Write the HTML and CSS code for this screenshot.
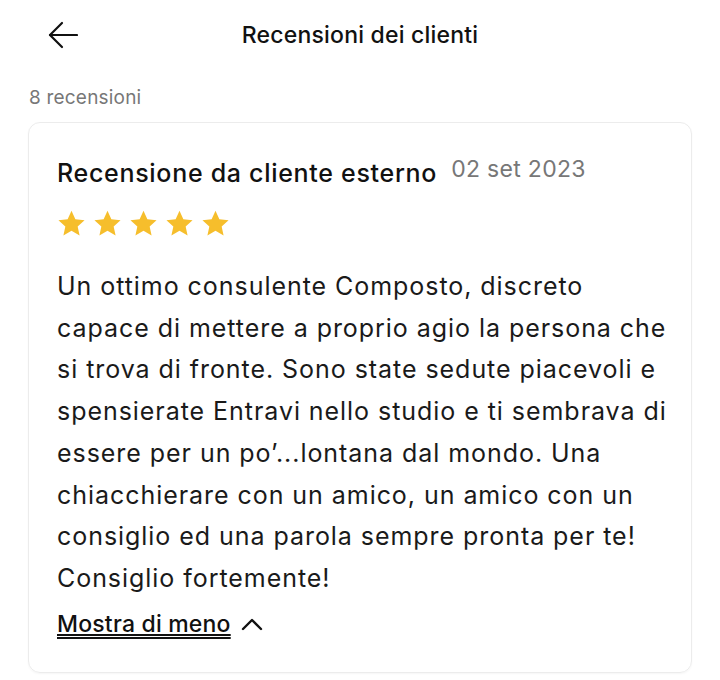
FILE: index.html
```html
<!DOCTYPE html>
<html lang="it">
<head>
    <meta charset="UTF-8">
    <meta name="viewport" content="width=device-width, initial-scale=1.0">
    <title>Recensioni dei clienti</title>
    <link rel="stylesheet" href="styles.css">
</head>
<body>
    <header class="topbar">
        <button class="back" aria-label="Indietro">
            <svg width="30" height="28" viewBox="0 0 30 28" fill="none" stroke="#111" stroke-width="2.2" stroke-linecap="round" stroke-linejoin="round">
                <path d="M29 14H2"/>
                <path d="M14 2L2 14l12 12"/>
            </svg>
        </button>
        <h1>Recensioni dei clienti</h1>
    </header>

    <div class="count">8 recensioni</div>

    <section class="card">
        <div class="card-head">
            <h2>Recensione da cliente esterno</h2>
            <span class="date">02 set 2023</span>
        </div>
        <div class="stars">
            <svg viewBox="0 0 24 24"><path d="M12 1.5l3.2 7 7.6.8-5.7 5.1 1.6 7.6L12 18.1 5.3 22l1.6-7.6L1.2 9.3l7.6-.8z"/></svg>
            <svg viewBox="0 0 24 24"><path d="M12 1.5l3.2 7 7.6.8-5.7 5.1 1.6 7.6L12 18.1 5.3 22l1.6-7.6L1.2 9.3l7.6-.8z"/></svg>
            <svg viewBox="0 0 24 24"><path d="M12 1.5l3.2 7 7.6.8-5.7 5.1 1.6 7.6L12 18.1 5.3 22l1.6-7.6L1.2 9.3l7.6-.8z"/></svg>
            <svg viewBox="0 0 24 24"><path d="M12 1.5l3.2 7 7.6.8-5.7 5.1 1.6 7.6L12 18.1 5.3 22l1.6-7.6L1.2 9.3l7.6-.8z"/></svg>
            <svg viewBox="0 0 24 24"><path d="M12 1.5l3.2 7 7.6.8-5.7 5.1 1.6 7.6L12 18.1 5.3 22l1.6-7.6L1.2 9.3l7.6-.8z"/></svg>
        </div>
        <p class="text">
            Un ottimo consulente Composto, discreto<br>
            capace di mettere a proprio agio la persona che<br>
            si trova di fronte. Sono state sedute piacevoli e<br>
            spensierate Entravi nello studio e ti sembrava di<br>
            essere per un po’...lontana dal mondo. Una<br>
            chiacchierare con un amico, un amico con un<br>
            consiglio ed una parola sempre pronta per te!<br>
            Consiglio fortemente!
        </p>
        <a class="toggle" href="#">
            <span>Mostra di meno</span>
            <svg width="22" height="14" viewBox="0 0 22 14" fill="none" stroke="#111" stroke-width="2.4" stroke-linecap="round" stroke-linejoin="round">
                <path d="M2 12L11 3l9 9"/>
            </svg>
        </a>
    </section>
</body>
</html>
```

FILE: styles.css
```css
body {
    margin: 0;
    background: #fff;
    color: #1a1a1a;
    font-family: Inter, "Noto Sans", sans-serif;
}
.topbar {
    position: relative;
    height: 70px;
    display: flex;
    align-items: center;
    justify-content: center;
}
.topbar h1 {
    margin: 0;
    font-size: 23px;
    font-weight: 500;
    letter-spacing: 0.2px;
    color: #111;
}
.back {
    position: absolute;
    left: 48px;
    top: 21px;
    padding: 0;
    border: none;
    background: none;
    cursor: pointer;
    line-height: 0;
}
.count {
    margin: 16px 0 0 29px;
    font-size: 19px;
    letter-spacing: 0.2px;
    color: #777;
}
.card {
    margin: 13px 28px 8px 28px;
    padding: 32px 20px 34px 28px;
    border: 1px solid #ececec;
    border-radius: 12px;
    box-shadow: 0 1px 2px rgba(0, 0, 0, 0.04);
}
.card-head {
    display: flex;
    align-items: flex-start;
    gap: 14px;
}
.card-head h2 {
    margin: 3px 0 0 0;
    font-size: 25px;
    font-weight: 500;
    letter-spacing: 0.7px;
    color: #111;
}
.date {
    font-size: 23px;
    letter-spacing: 0.3px;
    color: #777;
}
.stars {
    display: flex;
    gap: 7px;
    margin-top: 21px;
}
.stars svg {
    width: 29px;
    height: 29px;
    fill: #f6be2c;
}
.text {
    margin: 28px 0 0 0;
    font-size: 25px;
    letter-spacing: 0.95px;
    line-height: 41.7px;
    white-space: nowrap;
    color: #1a1a1a;
}
.toggle {
    display: inline-flex;
    align-items: center;
    gap: 10px;
    margin-top: 10px;
    color: #111;
    font-size: 23px;
    font-weight: 500;
    letter-spacing: 0.2px;
}
.toggle span {
    text-decoration: underline;
    text-underline-offset: 5px;
    text-decoration-thickness: 2px;
}
```
